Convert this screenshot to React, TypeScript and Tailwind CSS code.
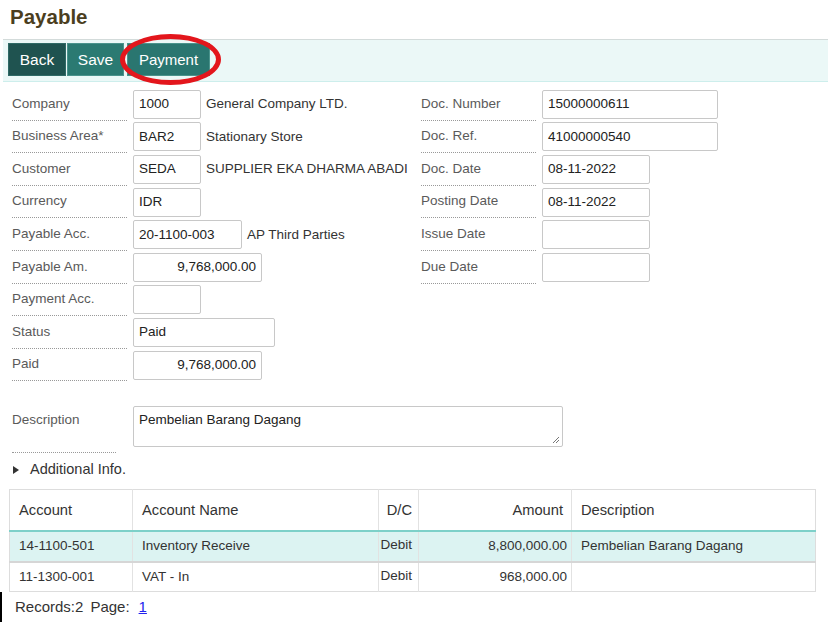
const leftRows: { label: string; value?: string; w: string; right?: boolean; note?: string }[] = [
  { label: 'Company', value: '1000', w: 'w-[68px]', note: 'General Company LTD.' },
  { label: 'Business Area*', value: 'BAR2', w: 'w-[68px]', note: 'Stationary Store' },
  { label: 'Customer', value: 'SEDA', w: 'w-[68px]', note: 'SUPPLIER EKA DHARMA ABADI' },
  { label: 'Currency', value: 'IDR', w: 'w-[68px]' },
  { label: 'Payable Acc.', value: '20-1100-003', w: 'w-[109px]', note: 'AP Third Parties' },
  { label: 'Payable Am.', value: '9,768,000.00', w: 'w-[129px]', right: true },
  { label: 'Payment Acc.', value: '', w: 'w-[68px]' },
  { label: 'Status', value: 'Paid', w: 'w-[142px]' },
  { label: 'Paid', value: '9,768,000.00', w: 'w-[129px]', right: true },
];

const rightRows: { label: string; value: string; w: string }[] = [
  { label: 'Doc. Number', value: '15000000611', w: 'w-[176px]' },
  { label: 'Doc. Ref.', value: '41000000540', w: 'w-[176px]' },
  { label: 'Doc. Date', value: '08-11-2022', w: 'w-[108px]' },
  { label: 'Posting Date', value: '08-11-2022', w: 'w-[108px]' },
  { label: 'Issue Date', value: '', w: 'w-[108px]' },
  { label: 'Due Date', value: '', w: 'w-[108px]' },
];

const lines = [
  { acc: '14-1100-501', name: 'Inventory Receive', dc: 'Debit', amt: '8,800,000.00', desc: 'Pembelian Barang Dagang' },
  { acc: '11-1300-001', name: 'VAT - In', dc: 'Debit', amt: '968,000.00', desc: '' },
];

const Field = ({ value, w, right }: { value?: string; w: string; right?: boolean }) => (
  <div
    className={`${w} h-[29px] border border-[#c8c8c8] rounded-[2px] bg-white flex items-center px-[5px] text-[13.5px] text-[#222] ${
      right ? 'justify-end' : ''
    }`}
  >
    {value}
  </div>
);

const Row = ({ label, children, labelW }: { label: string; children: React.ReactNode; labelW: string }) => (
  <div className="flex items-center h-[32.6px]">
    <div className={`${labelW} h-full flex items-center border-b border-dotted border-[#999] text-[13.5px] text-[#5a5a5a]`}>
      {label}
    </div>
    <div className="ml-[6px] flex items-center">{children}</div>
  </div>
);

export default function App() {
  return (
    <div className="relative w-[828px] h-[626px] overflow-hidden bg-white font-['Liberation_Sans',Arial,sans-serif]">
      <div className="h-[39px] pl-[10px] pt-[2px] text-[20.5px] font-bold text-[#4b3e1e]">Payable</div>

      <div className="ml-[3px] h-[43px] bg-[#ebf8f7] border-t border-[#d3dbda] border-b border-b-[#cdeeec] flex items-start pt-[3px] pl-[5px]">
        <button className="w-[58px] h-[33px] bg-[#1f5350] border border-[#2f6a66] text-white text-[15.5px] leading-[30px]">Back</button>
        <button className="ml-[1px] w-[57px] h-[33px] bg-[#2b7a72] border border-[#4a938c] text-white text-[15.5px] leading-[30px]">Save</button>
        <button className="ml-[3px] w-[83px] h-[33px] bg-[#2a7670] border border-[#4a938c] text-white text-[15px] leading-[30px]">Payment</button>
      </div>

      <div className="absolute left-[120px] top-[34px] w-[101px] h-[51px] rounded-[50%] border-[5px] border-[#e3161c]" />

      <div className="flex mt-[6px]">
        <div className="pl-[12px] w-[421px]">
          {leftRows.map((r) => (
            <Row key={r.label} label={r.label} labelW="w-[115px]">
              <Field value={r.value} w={r.w} right={r.right} />
              {r.note && <span className="ml-[5px] text-[13.5px] text-[#333]">{r.note}</span>}
            </Row>
          ))}
        </div>
        <div>
          {rightRows.map((r) => (
            <Row key={r.label} label={r.label} labelW="w-[115px]">
              <Field value={r.value} w={r.w} />
            </Row>
          ))}
        </div>
      </div>

      <div className="flex items-start pl-[12px] mt-[23px]">
        <div className="w-[104px] h-[49px] border-b border-dotted border-[#999] pt-[6px] text-[13.5px] text-[#5a5a5a]">Description</div>
        <div className="relative ml-[17px] mt-[2px] w-[430px] h-[41px] border border-[#c8c8c8] rounded-[2px] px-[5px] pt-[3px] text-[13.5px] text-[#222]">
          Pembelian Barang Dagang
          <svg className="absolute right-[2px] bottom-[2px]" width="8" height="8" viewBox="0 0 8 8">
            <path d="M7 1L1 7M7 4L4 7" stroke="#777" strokeWidth="1" />
          </svg>
        </div>
      </div>

      <div className="flex items-center pl-[13px] mt-[7px] h-[20px] text-[14.5px] text-[#333]">
        <svg width="6" height="8" viewBox="0 0 6 8">
          <path d="M0 0L6 4L0 8Z" fill="#333" />
        </svg>
        <span className="ml-[11px]">Additional Info.</span>
      </div>

      <table className="ml-[9px] mt-[9px] w-[807px] border-collapse border border-[#dddddd] text-[#333]">
        <thead>
          <tr className="h-[41px] text-[14.7px] border-b-2 border-[#7dd0c9]">
            <th className="w-[123px] font-normal text-left pl-[9px] border-r border-[#e2e2e2]">Account</th>
            <th className="w-[246px] font-normal text-left pl-[9px] border-r border-[#e2e2e2]">Account Name</th>
            <th className="w-[40px] font-normal text-right pr-[6px] border-r border-[#e2e2e2]">D/C</th>
            <th className="w-[153px] font-normal text-right pr-[8px] border-r border-[#e2e2e2]">Amount</th>
            <th className="font-normal text-left pl-[9px]">Description</th>
          </tr>
        </thead>
        <tbody>
          {lines.map((l, i) => (
            <tr
              key={l.acc}
              className={`text-[13.5px] ${i === 0 ? 'h-[31px] bg-[#dcf3f2] border-b-2 border-[#d6d6d6]' : 'h-[30px] bg-white'}`}
            >
              <td className="pl-[9px] border-r border-[#e2e2e2]">{l.acc}</td>
              <td className="pl-[9px] border-r border-[#e2e2e2]">{l.name}</td>
              <td className="pr-[6px] text-right align-top pt-[3px] border-r border-[#e2e2e2]">{l.dc}</td>
              <td className="pr-[4px] text-right border-r border-[#e2e2e2]">{l.amt}</td>
              <td className="pl-[9px]">{l.desc}</td>
            </tr>
          ))}
        </tbody>
      </table>

      <div className="h-[30px] border-l-2 border-black flex items-center pl-[13px] text-[15px] text-[#333]">
        Records:2<span className="ml-[7px]">Page:</span>
        <a href="#" className="ml-[9px] text-[#2222ee] underline">1</a>
      </div>
    </div>
  );
}
